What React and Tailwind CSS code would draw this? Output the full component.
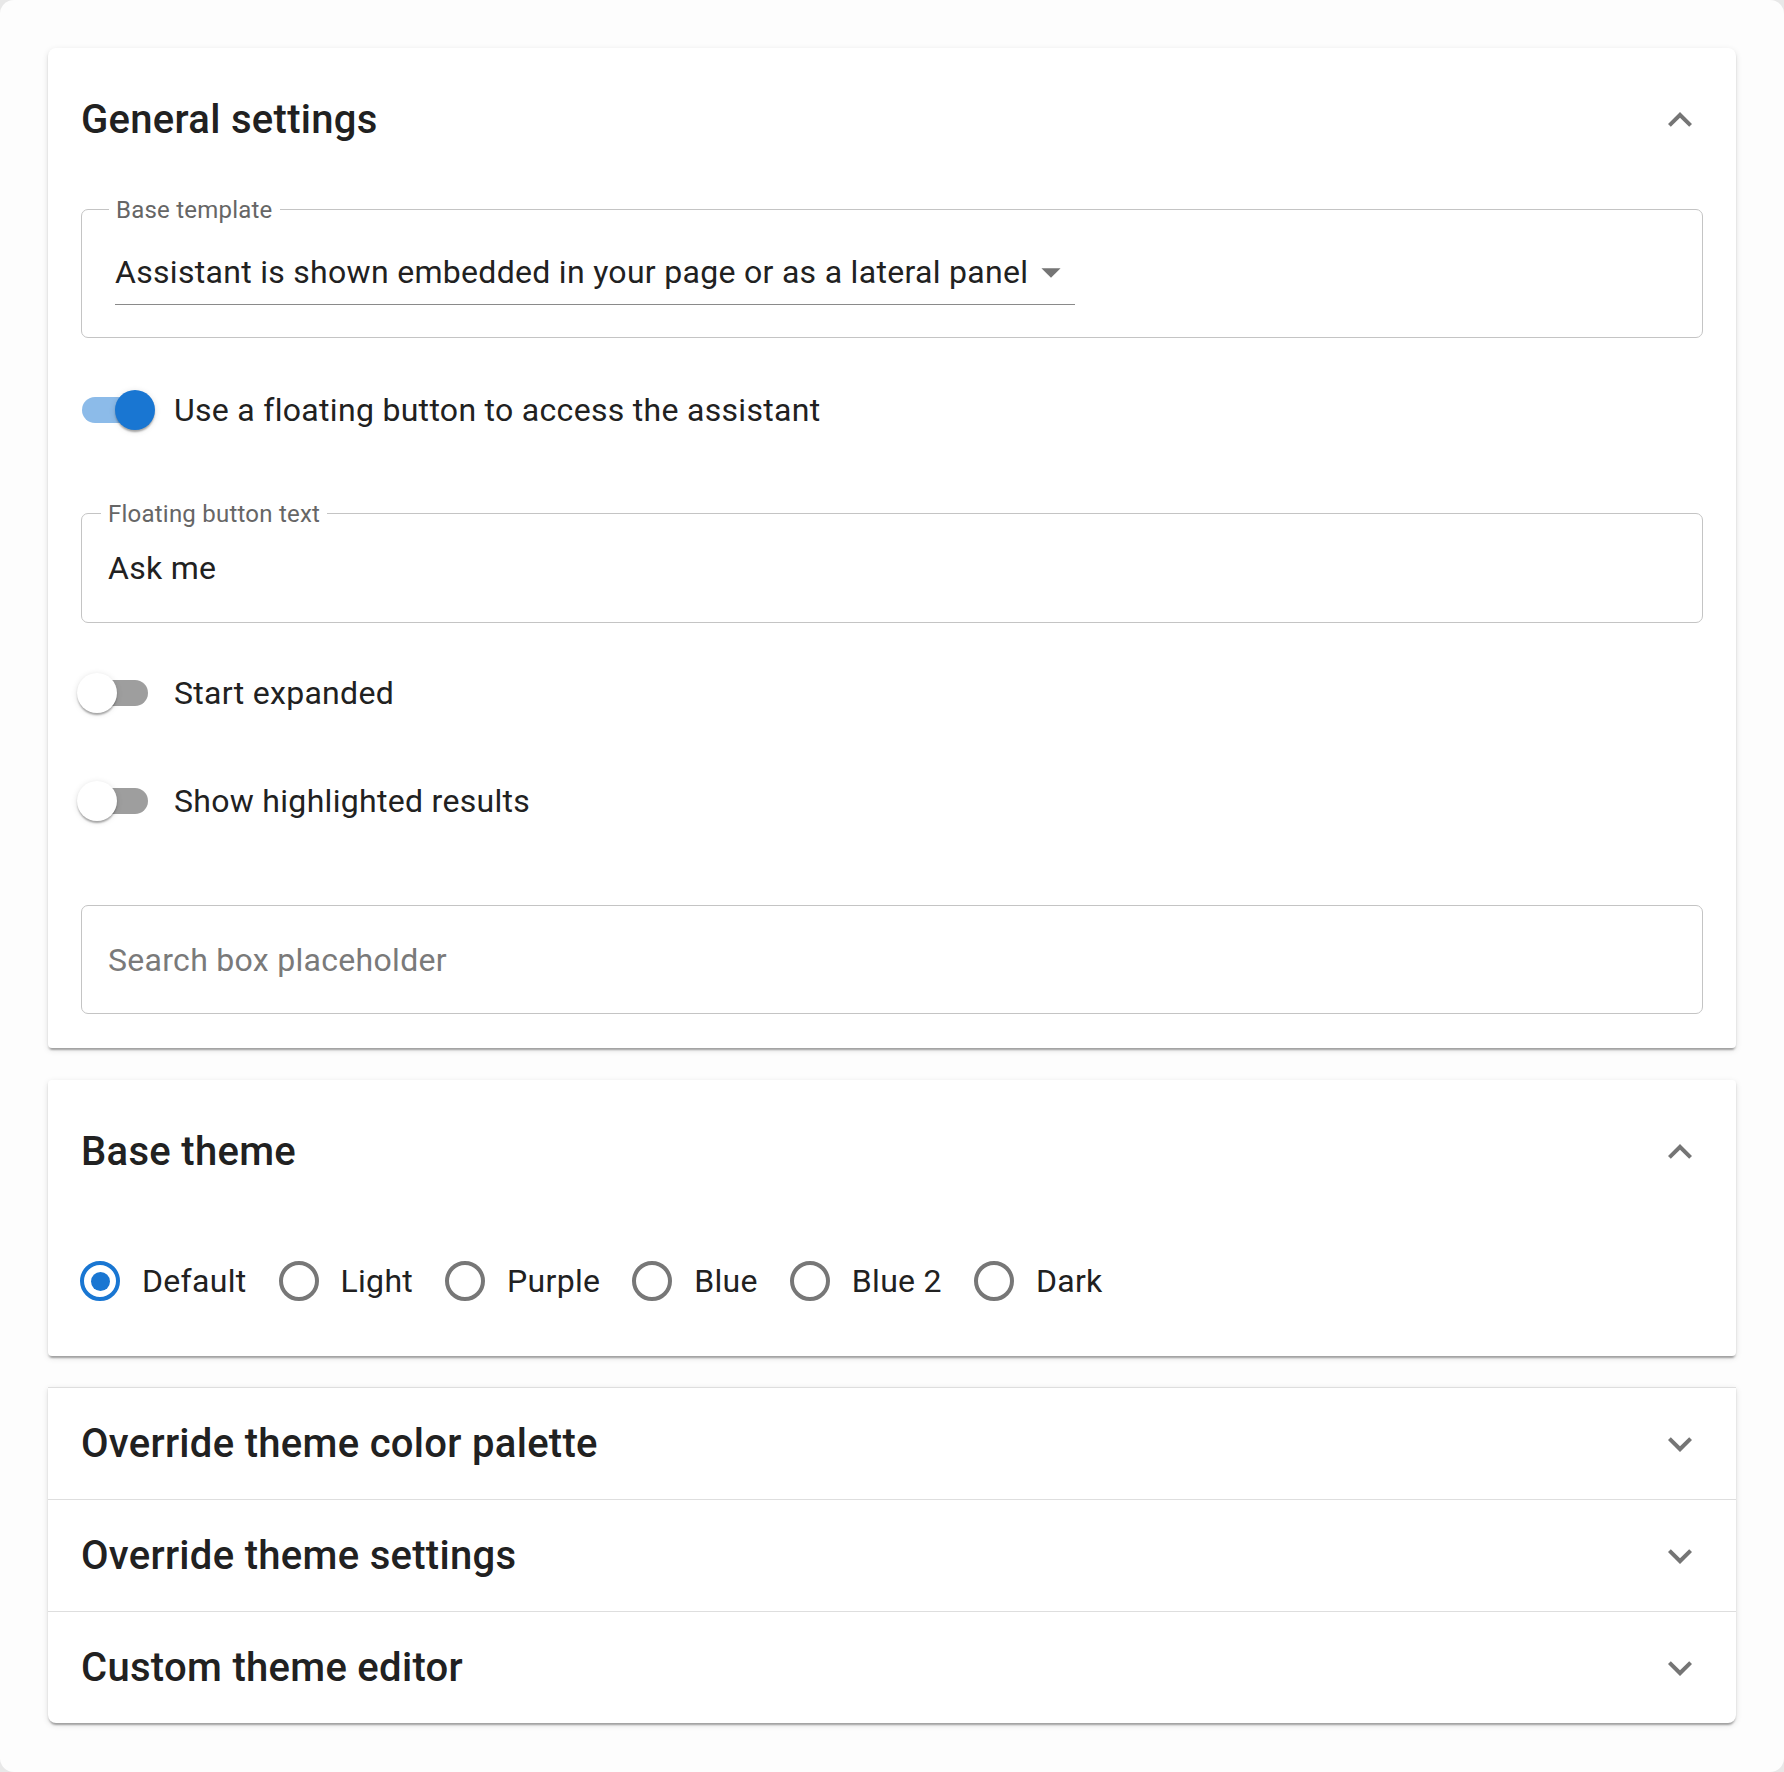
import React, { useState } from 'react';

const FONT = { fontFamily: 'Roboto, "Noto Sans", Arial, sans-serif' };

const Chevron = ({ up }) => (
  <svg viewBox="0 0 24 24" className={`w-[48px] h-[48px] fill-[#757575] ${up ? 'rotate-180' : ''}`}>
    <path d="M16.59 8.59 12 13.17 7.41 8.59 6 10l6 6 6-6z" />
  </svg>
);

const SectionHeader = ({ title, open, height = 'h-[144px]' }) => (
  <div className={`flex items-center justify-between pl-[33px] pr-[32px] ${height}`}>
    <h2 className="text-[40px] font-medium tracking-[0.3px] text-[#212121] leading-none">{title}</h2>
    <Chevron up={open} />
  </div>
);

const Toggle = ({ on, onChange, label, className = '' }) => (
  <div className={`flex items-center h-[71px] ${className}`}>
    <button
      type="button"
      onClick={() => onChange(!on)}
      className="relative w-[82px] h-[40px] -ml-[4px] shrink-0"
    >
      <span
        className={`absolute left-[5px] top-[7px] w-[66px] h-[26px] rounded-full ${on ? 'bg-[#8cbbe9]' : 'bg-[#9e9e9e]'}`}
      />
      <span
        className={`absolute top-0 w-[40px] h-[40px] rounded-full shadow-[0_3px_2px_-1px_rgba(0,0,0,0.2),0_2px_2px_0_rgba(0,0,0,0.14),0_1px_6px_0_rgba(0,0,0,0.12)] ${on ? 'left-[38px] bg-[#1976d2]' : 'left-0 bg-white'}`}
      />
    </button>
    <span className="ml-[15px] text-[32px] tracking-[0.3px] text-[#212121] leading-none">{label}</span>
  </div>
);

const FloatingLabel = ({ children, left = 'left-[19px]' }) => (
  <span
    className={`absolute ${left} top-0 -translate-y-1/2 bg-white px-[7px] text-[24px] tracking-[0.225px] leading-[28px] text-[#666666]`}
  >
    {children}
  </span>
);

const Radio = ({ checked, label, onSelect }) => (
  <button type="button" onClick={onSelect} className="flex items-center gap-[22px]">
    <span
      className={`flex items-center justify-center w-[40px] h-[40px] rounded-full border-[4px] ${checked ? 'border-[#1976d2]' : 'border-[#777777]'}`}
    >
      {checked && <span className="w-[19px] h-[19px] rounded-full bg-[#1976d2]" />}
    </span>
    <span className="text-[32px] tracking-[0.3px] text-[#212121] leading-none">{label}</span>
  </button>
);

const panelShadow =
  'shadow-[0_4px_2px_-2px_rgba(0,0,0,0.2),0_2px_2px_0_rgba(0,0,0,0.14),0_2px_6px_0_rgba(0,0,0,0.12)]';

export default function App() {
  const [floating, setFloating] = useState(true);
  const [expanded, setExpanded] = useState(false);
  const [highlighted, setHighlighted] = useState(false);
  const [theme, setTheme] = useState('Default');
  const [buttonText, setButtonText] = useState('Ask me');

  const themes = ['Default', 'Light', 'Purple', 'Blue', 'Blue 2', 'Dark'];

  return (
    <div className="w-[1784px] h-[1772px] bg-[#e8e8e8]" style={FONT}>
      <div className="h-full rounded-[14px] bg-[#fdfdfd] px-[48px] pt-[48px] flex flex-col">
        {/* General settings */}
        <section className={`bg-white rounded-t-[8px] rounded-b-[4px] ${panelShadow}`}>
          <SectionHeader title="General settings" open />
          <div className="px-[33px] pb-[34px] flex flex-col">
            <div className="relative mt-[17px] h-[129px] border border-[#c4c4c4] rounded-[7px] pl-[33px]">
              <FloatingLabel left="left-[27px]">Base template</FloatingLabel>
              <div className="pt-[39px]">
                <div className="inline-flex items-center h-[56px] pb-[9px] border-b border-[#8a8a8a]">
                  <span className="text-[32px] tracking-[0.3px] leading-[46px] text-[#212121]">
                    Assistant is shown embedded in your page or as a lateral panel
                  </span>
                  <svg viewBox="0 0 24 24" className="w-[46px] h-[46px] fill-[#757575] mr-[1px]">
                    <path d="M7 10l5 5 5-5z" />
                  </svg>
                </div>
              </div>
            </div>

            <Toggle
              className="mt-[36px]"
              on={floating}
              onChange={setFloating}
              label="Use a floating button to access the assistant"
            />

            <div className="relative mt-[68px] h-[110px] border border-[#c4c4c4] rounded-[7px] flex items-center pl-[26px]">
              <FloatingLabel>Floating button text</FloatingLabel>
              <input
                value={buttonText}
                onChange={(e) => setButtonText(e.target.value)}
                className="w-full bg-transparent outline-none text-[32px] tracking-[0.3px] text-[#212121]"
              />
            </div>

            <Toggle className="mt-[34px]" on={expanded} onChange={setExpanded} label="Start expanded" />
            <Toggle
              className="mt-[37px]"
              on={highlighted}
              onChange={setHighlighted}
              label="Show highlighted results"
            />

            <div className="relative mt-[69px] h-[109px] border border-[#c4c4c4] rounded-[7px] flex items-center pl-[26px]">
              <input
                placeholder="Search box placeholder"
                className="w-full bg-transparent outline-none text-[32px] tracking-[0.3px] text-[#212121] placeholder:text-[#7a7a7a]"
              />
            </div>
          </div>
        </section>

        {/* Base theme */}
        <section className={`mt-[32px] bg-white rounded-[4px] ${panelShadow}`}>
          <SectionHeader title="Base theme" open />
          <div className="pl-[32px] pr-[33px] pt-[37px] pb-[55px] flex items-center gap-[32px]">
            {themes.map((t) => (
              <Radio key={t} label={t} checked={theme === t} onSelect={() => setTheme(t)} />
            ))}
          </div>
        </section>

        {/* Collapsed sections */}
        <section className={`mt-[31px] bg-white rounded-b-[8px] ${panelShadow}`}>
          {['Override theme color palette', 'Override theme settings', 'Custom theme editor'].map((t) => (
            <div key={t} className="border-t border-[#dedede]">
              <SectionHeader title={t} height="h-[111px]" />
            </div>
          ))}
        </section>
      </div>
    </div>
  );
}
